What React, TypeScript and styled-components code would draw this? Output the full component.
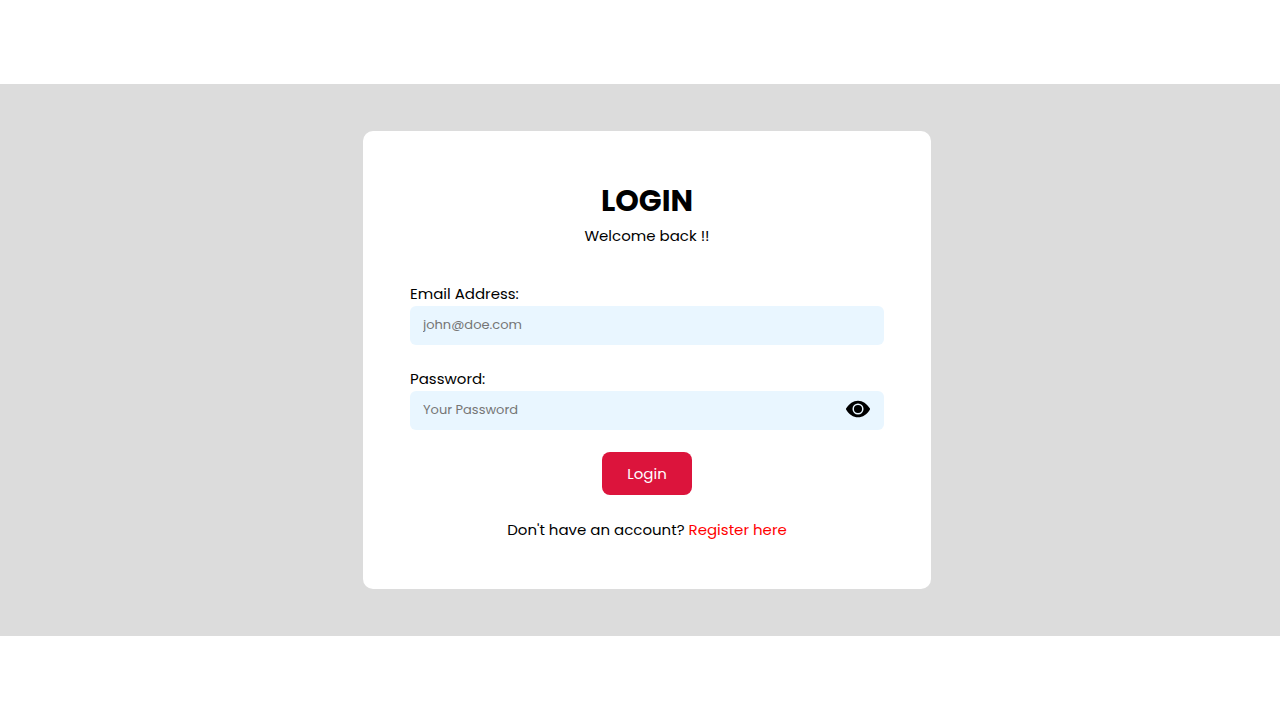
import React, { useState } from "react";
import styled, { createGlobalStyle } from "styled-components";

const GlobalStyle = createGlobalStyle`
  *, *::before, *::after { box-sizing: border-box; }
  body {
    margin: 0;
    background: #fff;
    color: #000;
    font: 400 15px/24px Poppins, Inter, sans-serif;
  }
`;

const Page = styled.main`
  min-height: 100vh;
  display: flex;
  flex-direction: column;
  justify-content: center;
`;

const Band = styled.section`
  background: #dcdcdc;
  padding: 47px 0 47px 14px;
  display: flex;
  justify-content: center;
`;

const Card = styled.form`
  width: 100%;
  max-width: 568px;
  padding: 47px;
  border-radius: 10px;
  background: #fff;
  display: flex;
  flex-direction: column;
`;

const Header = styled.header`
  text-align: center;
  margin-bottom: 34px;
`;

const Title = styled.h1`
  margin: 0;
  font-size: 30px;
  line-height: 46px;
  font-weight: 700;
`;

const Subtitle = styled.p`
  margin: 0;
`;

const Field = styled.div`
  display: flex;
  flex-direction: column;
  margin-bottom: 22px;
`;

const Label = styled.label`
  line-height: 24px;
`;

const InputBox = styled.div`
  display: flex;
  align-items: center;
  height: 39px;
  padding: 0 13px;
  border-radius: 6px;
  background: #e9f6ff;
`;

const Input = styled.input`
  flex: 1;
  min-width: 0;
  padding: 0 0 2px;
  border: 0;
  outline: 0;
  background: transparent;
  font: inherit;
  font-size: 13px;
  line-height: 20px;
  &::placeholder { color: #757575; opacity: 1; }
`;

const IconButton = styled.button`
  display: flex;
  padding: 0 0 4px;
  border: 0;
  background: none;
  color: #000;
  cursor: pointer;
`;

const SubmitButton = styled.button`
  align-self: center;
  padding: 10px 25px 9px;
  border: 0;
  border-radius: 8px;
  background: #dc143c;
  color: #fff;
  font: inherit;
  cursor: pointer;
`;

const Footer = styled.p`
  margin: 23px 0 0;
  text-align: center;
`;

const RegisterLink = styled.a`
  color: #f00;
  text-decoration: none;
`;

function EyeIcon() {
  return (
    <svg width="26" height="26" viewBox="0 0 26 26" aria-hidden="true">
      <path
        fill="currentColor"
        d="M13 4.700C8.200 4.700 4.200 7.600 1.200 12.300a1.200 1.200 0 0 0 0 1.400C4.200 18.400 8.200 21.300 13 21.300s8.800-2.900 11.800-7.600a1.200 1.200 0 0 0 0-1.400C21.800 7.600 17.800 4.700 13 4.700Z"
      />
      <circle cx="13" cy="13" r="4.800" fill="none" stroke="#e9f6ff" strokeWidth="1.500" />
    </svg>
  );
}

export default function App() {
  const [visible, setVisible] = useState(false);
  return (
    <>
      <GlobalStyle />
      <Page>
        <Band>
          <Card onSubmit={(e: React.FormEvent) => e.preventDefault()}>
            <Header>
              <Title>LOGIN</Title>
              <Subtitle>Welcome back !!</Subtitle>
            </Header>
            <Field>
              <Label htmlFor="email">Email Address:</Label>
              <InputBox>
                <Input id="email" type="email" placeholder="john@doe.com" />
              </InputBox>
            </Field>
            <Field>
              <Label htmlFor="password">Password:</Label>
              <InputBox>
                <Input
                  id="password"
                  type={visible ? "text" : "password"}
                  placeholder="Your Password"
                />
                <IconButton
                  type="button"
                  aria-label="Show password"
                  aria-pressed={visible}
                  onClick={() => setVisible(!visible)}
                >
                  <EyeIcon />
                </IconButton>
              </InputBox>
            </Field>
            <SubmitButton type="submit">Login</SubmitButton>
            <Footer>
              Don't have an account? <RegisterLink href="#register">Register here</RegisterLink>
            </Footer>
          </Card>
        </Band>
      </Page>
    </>
  );
}
